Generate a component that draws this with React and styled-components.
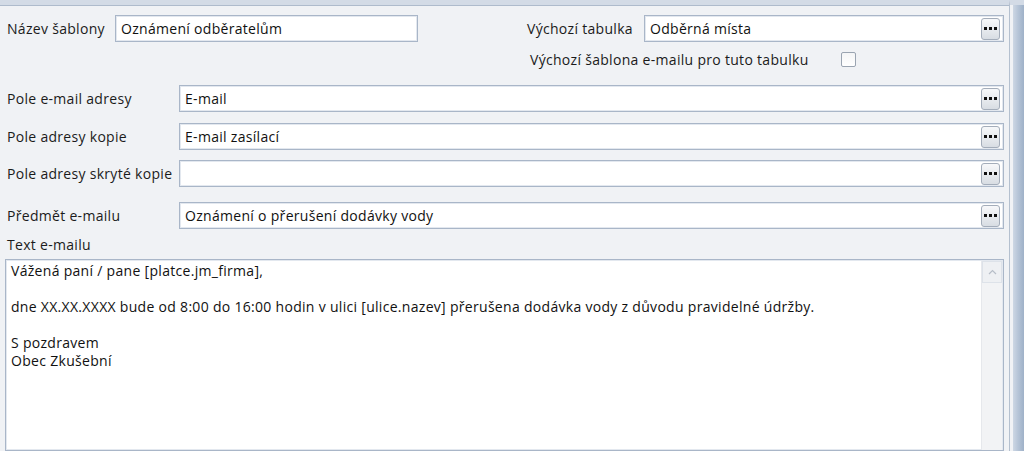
import styled, { createGlobalStyle } from 'styled-components'

const GlobalStyle = createGlobalStyle`
	html, body {
		margin: 0;
		padding: 0;
		background: #f0f2f5;
	}
	body {
		font-family: "Open Sans", "Noto Sans", sans-serif;
		font-size: 14px;
		letter-spacing: 0.3px;
		color: #1b1b1b;
	}
`

const Window = styled.div`
	width: 1024px;
	height: 451px;
	overflow: hidden;
	display: flex;
	background: #f0f2f5;
`

const Main = styled.div`
	flex: 1;
	display: flex;
	flex-direction: column;
	border-top: 5px solid #d3dbe6;
	box-shadow: inset 0 1px 0 #aebbcc;
	padding: 0 5px 0 5px;
	border-right: 1px solid #b4c0cf;
`

const Frame = styled.div`
	width: 11px;
	border-top: 5px solid #d3dbe6;
	display: flex;
	padding-left: 3px;
	background: #f0f2f5;
	&::after {
		content: '';
		flex: 1;
		background: linear-gradient(90deg, #cdd7e4 0%, #b4c3d6 50%, #9fb1c8 100%);
	}
`

const TopRow = styled.div`
	display: flex;
	align-items: flex-start;
	margin-top: 10px;
`

const Group = styled.div`
	display: flex;
	flex-direction: column;
	flex: ${p => (p.$grow ? 1 : 'none')};
	margin-left: ${p => p.$offset || 0}px;
`

const Line = styled.div`
	display: flex;
	align-items: center;
	height: ${p => p.$h || 27}px;
	margin-top: ${p => p.$mt || 0}px;
`

const Label = styled.span`
	width: ${p => p.$w}px;
	flex: none;
	padding-left: ${p => p.$pl ?? 2}px;
	box-sizing: border-box;
	white-space: nowrap;
`

const Input = styled.div`
	box-sizing: border-box;
	height: 27px;
	width: ${p => (p.$w ? `${p.$w}px` : 'auto')};
	flex: ${p => (p.$w ? 'none' : 1)};
	background: #fff;
	border: 1px solid #a9b6c8;
	box-shadow: inset 0 0 0 1px #e3e8ef;
	display: flex;
	align-items: center;
	padding: 0 3px 0 5px;
	color: #111;
	white-space: nowrap;
`

const Value = styled.span`
	flex: 1;
`

const DotsButton = styled.button`
	width: 19px;
	height: 22px;
	padding: 0;
	border: 1px solid #a4adba;
	border-radius: 3px;
	background: linear-gradient(180deg, #f7f8fa 0%, #e8ebef 50%, #d8dde3 100%);
	display: flex;
	align-items: center;
	justify-content: center;
	gap: 2px;
	span {
		width: 3px;
		height: 3px;
		background: #111;
	}
`

const Checkbox = styled.span`
	width: 13px;
	height: 13px;
	border: 1px solid #9aa4b1;
	background: linear-gradient(180deg, #f4f5f6, #ffffff);
	border-radius: 2px;
`

const EditorBox = styled.div`
	flex: 1;
	margin-top: 6px;
	background: #fff;
	border: 1px solid #a9b6c8;
	box-shadow: inset 0 0 0 1px #e3e8ef;
	display: flex;
`

const EditorText = styled.div`
	flex: 1;
	padding: 2px 5px;
	line-height: 18px;
	color: #111;
	p {
		margin: 0;
		min-height: 18px;
		white-space: nowrap;
	}
`

const ScrollTrack = styled.div`
	width: 20px;
	margin: 1px 1px 0 0;
	background: #f2f3f5;
	border-left: 1px solid #e6e8ec;
	display: flex;
	flex-direction: column;
`

const ScrollUp = styled.div`
	height: 20px;
	border: 1px solid #dde2e9;
	background: #eef0f3;
	display: flex;
	align-items: center;
	justify-content: center;
`

const Dots = () => (
	<DotsButton>
		<span />
		<span />
		<span />
	</DotsButton>
)

const fields = [
	{ label: 'Pole e-mail adresy', value: 'E-mail', mt: 18 },
	{ label: 'Pole adresy kopie', value: 'E-mail zasílací', mt: 11 },
	{ label: 'Pole adresy skryté kopie', value: '', mt: 10 },
	{ label: 'Předmět e-mailu', value: 'Oznámení o přerušení dodávky vody', mt: 15 },
]

const App = () => {
	return (
		<Window>
			<GlobalStyle />
			<Main>
				<TopRow>
					<Group>
						<Line>
							<Label $w={110}>Název šablony</Label>
							<Input $w={303}>
								<Value>Oznámení odběratelům</Value>
							</Input>
						</Line>
					</Group>
					<Group $grow $offset={109}>
						<Line>
							<Label $w={117} $pl={0}>Výchozí tabulka</Label>
							<Input>
								<Value>Odběrná místa</Value>
								<Dots />
							</Input>
						</Line>
						<Line $h={15} $mt={10}>
							<Label $w={314} $pl={3}>Výchozí šablona e-mailu pro tuto tabulku</Label>
							<Checkbox />
						</Line>
					</Group>
				</TopRow>
				{fields.map(f => (
					<Line key={f.label} $mt={f.mt}>
						<Label $w={174}>{f.label}</Label>
						<Input>
							<Value>{f.value}</Value>
							<Dots />
						</Input>
					</Line>
				))}
				<Line $h={18} $mt={6}>
					<Label $w={174}>Text e-mailu</Label>
				</Line>
				<EditorBox>
					<EditorText>
						<p>Vážená paní / pane [platce.jm_firma],</p>
						<p />
						<p>
							dne XX.XX.XXXX bude od 8:00 do 16:00 hodin v ulici [ulice.nazev] přerušena dodávka vody z
							důvodu pravidelné údržby.
						</p>
						<p />
						<p>S pozdravem</p>
						<p>Obec Zkušební</p>
					</EditorText>
					<ScrollTrack>
						<ScrollUp>
							<svg width="9" height="6" viewBox="0 0 9 6">
								<path d="M1 5 L4.5 1.5 L8 5" fill="none" stroke="#b7bec8" strokeWidth="1.2" />
							</svg>
						</ScrollUp>
					</ScrollTrack>
				</EditorBox>
			</Main>
			<Frame />
		</Window>
	)
}

export default App
